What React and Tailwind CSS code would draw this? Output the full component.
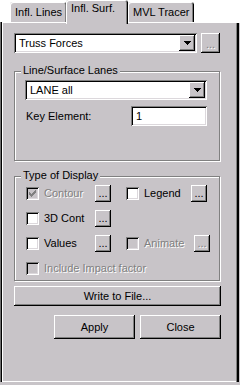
import React from "react";

const face = "bg-[#c8c4c8]";
const raised =
  "shadow-[inset_-1px_-1px_#000,inset_1px_1px_#fff,inset_-2px_-2px_#808080]";
const sunken =
  "shadow-[inset_1px_1px_#808080,inset_-1px_-1px_#fff,inset_2px_2px_#000,inset_-2px_-2px_#dcd8dc]";
const etched = "border border-[#808080] shadow-[inset_1px_1px_#fff,1px_1px_#fff]";
const grayText = "text-[#808080] [text-shadow:1px_1px_#fff]";

const Arrow = () => (
  <svg width="7" height="4" viewBox="0 0 7 4" shapeRendering="crispEdges">
    <path d="M0 0h7v1h-1v1h-1v1h-1v1h-1v-1h-1v-1h-1v-1h-1z" fill="#000" />
  </svg>
);

const Combo = ({ text, className }) => (
  <div className={`${sunken} bg-white h-[20px] flex items-center ${className}`}>
    <span className="flex-1 pl-[5px] leading-none">{text}</span>
    <div
      className={`${face} ${raised} w-[16px] h-[16px] mr-[2px] flex items-center justify-center`}
    >
      <Arrow />
    </div>
  </div>
);

const Dots = ({ disabled, className = "" }) => (
  <div
    className={`${face} ${raised} w-[16px] h-[17px] shrink-0 flex items-end justify-center pb-[3px] leading-none ${
      disabled ? grayText : ""
    } ${className}`}
  >
    ...
  </div>
);

const Check = ({ checked, disabled }) => (
  <div
    className={`w-[13px] h-[13px] shrink-0 ${disabled ? face : "bg-white"} ${sunken} flex items-center justify-center`}
  >
    {checked && (
      <svg width="7" height="7" viewBox="0 0 7 7" shapeRendering="crispEdges">
        <path
          d="M6 0h1v3h-1v1h-1v1h-1v1h-1v1h-1v-1h-1v-1h-1v-3h1v1h1v1h1v-1h1v-1h1z"
          fill={disabled ? "#808080" : "#000"}
        />
      </svg>
    )}
  </div>
);

const Option = ({ label, width, checked, disabled, dots, dotsDisabled }) => (
  <div className="flex items-center h-[17px]">
    <Check checked={checked} disabled={disabled} />
    <span className={`ml-[5px] leading-none ${width} ${disabled ? grayText : ""}`}>
      {label}
    </span>
    {dots && <Dots disabled={dotsDisabled} />}
  </div>
);

const Group = ({ title, className, children }) => (
  <div className={`relative ${etched} ${className}`}>
    <span className={`absolute top-[-8px] left-[6px] px-[2px] leading-[13px] ${face}`}>
      {title}
    </span>
    {children}
  </div>
);

const Tab = ({ label, active, className }) => (
  <div
    className={`${face} rounded-t-[3px] shadow-[inset_1px_1px_#fff,inset_-1px_0_#000,inset_-2px_0_#808080] ${
      active ? "h-[24px] pt-[2px] z-10 -mb-[2px]" : "h-[20px] pt-[4px]"
    } px-[5px] leading-[13px] whitespace-nowrap relative ${className}`}
  >
    {label}
  </div>
);

export default function App() {
  return (
    <div className="w-[240px] h-[385px] bg-white overflow-hidden font-['Liberation_Sans',Arial,sans-serif] text-[11px] text-black">
      <div className="h-[22px] flex items-end pl-[10px]">
        <Tab label="Infl. Lines" className="w-[57px]" />
        <Tab label="Infl. Surf." active className="w-[62px] -ml-[1px]" />
        <Tab label="MVL Tracer" className="w-[66px]" />
      </div>

      <div
        className={`${face} h-[360px] pl-[14px] pt-[11px] shadow-[inset_1px_0_#6e6e6e,inset_2px_0_#000,inset_0_1px_#fff,inset_3px_0_#fff,inset_-1px_0_#c8c4c8,inset_-3px_0_#000,inset_-4px_0_#808080,inset_0_-1px_#fff]`}
      >
        <div className="flex items-center gap-[4px]">
          <Combo text="Truss Forces" className="w-[183px]" />
          <Dots disabled className="w-[19px] h-[20px]" />
        </div>

        <Group title="Line/Surface Lanes" className="mt-[18px] w-[206px] h-[90px] pt-[8px] pl-[10px]">
          <Combo text="LANE all" className="w-[182px]" />
          <div className="flex items-center mt-[6px]">
            <span className="w-[106px] pl-[1px]">Key Element:</span>
            <div className={`${sunken} bg-white w-[76px] h-[20px] flex items-center pl-[5px]`}>
              1
            </div>
          </div>
        </Group>

        <Group title="Type of Display" className="mt-[15px] w-[206px] h-[105px] pt-[8px] pl-[11px]">
          <div className="flex flex-col gap-[8px]">
            <div className="flex">
              <div className="w-[100px]">
                <Option label="Contour" width="w-[51px]" checked disabled dots />
              </div>
              <Option label="Legend" width="w-[47px]" dots />
            </div>
            <div className="flex">
              <Option label="3D Cont" width="w-[51px]" dots />
            </div>
            <div className="flex">
              <div className="w-[100px]">
                <Option label="Values" width="w-[51px]" dots />
              </div>
              <Option label="Animate" width="w-[50px]" disabled dots dotsDisabled />
            </div>
            <div className="flex">
              <Option label="Include Impact factor" width="w-auto" disabled />
            </div>
          </div>
        </Group>

        <button className={`${face} ${raised} mt-[5px] w-[207px] h-[20px] flex items-center justify-center leading-none`}>
          Write to File...
        </button>

        <div className="flex justify-end gap-[5px] w-[207px] mt-[9px]">
          <button className={`${face} ${raised} w-[81px] h-[24px] flex items-center justify-center leading-none`}>
            Apply
          </button>
          <button className={`${face} ${raised} w-[81px] h-[24px] flex items-center justify-center leading-none`}>
            Close
          </button>
        </div>
      </div>
      <div className={`${face} h-[3px]`} />
    </div>
  );
}
